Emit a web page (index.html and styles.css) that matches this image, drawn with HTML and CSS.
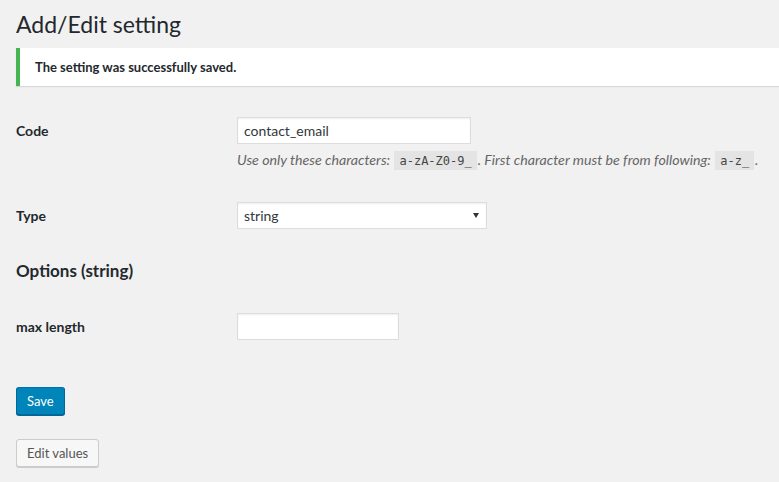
FILE: index.html
```html
<!DOCTYPE html>
<html lang="en">
<head>
<meta charset="utf-8">
<title>Add/Edit setting</title>
<link rel="stylesheet" href="styles.css">
</head>
<body>
<div class="wrap">
  <h1 class="page-title">Add/Edit setting</h1>
  <div class="notice notice-success"><p>The setting was successfully saved.</p></div>
  <form class="setting-form">
    <div class="field-row row-code">
      <label class="field-label" for="code">Code</label>
      <div class="field-control">
        <input class="text-input input-code" id="code" type="text" value="contact_email">
        <p class="description">Use only these characters: <code>a-zA-Z0-9_</code>. First character must be from following: <code>a-z_</code>.</p>
      </div>
    </div>
    <div class="field-row row-type">
      <label class="field-label" for="type">Type</label>
      <div class="field-control">
        <div class="select-wrap">
          <select id="type" class="select-input"><option>string</option></select>
        </div>
      </div>
    </div>
    <h2 class="section-title">Options (string)</h2>
    <div class="field-row row-max">
      <label class="field-label" for="maxlen">max length</label>
      <div class="field-control">
        <input class="text-input input-max" id="maxlen" type="text" value="">
      </div>
    </div>
    <div class="actions">
      <button type="button" class="button button-primary">Save</button>
      <button type="button" class="button button-secondary">Edit values</button>
    </div>
  </form>
</div>
</body>
</html>
```
FILE: styles.css
```css
html, body {
  margin: 0;
  padding: 0;
  background: #f1f1f1;
}
body {
  font-family: "Lato", "Open Sans", sans-serif;
  color: #444;
  font-size: 13px;
}
.wrap {
  padding: 0 0 0 16px;
}
.page-title {
  margin: 0;
  padding-top: 10px;
  font-size: 23px;
  font-weight: 400;
  line-height: 29px;
  color: #23282d;
}
.notice {
  margin-top: 9px;
  background: #fff;
  border-left: 4px solid #46b450;
  box-shadow: 0 1px 1px rgba(0,0,0,0.1);
  padding: 0 12px 0 15px;
}
.notice p {
  margin: 0;
  padding: 9px 0;
  line-height: 20px;
  font-size: 13px;
  font-weight: 700;
  color: #23282d;
}
.setting-form {
  display: flex;
  flex-direction: column;
}
.field-row {
  display: flex;
  align-items: flex-start;
}
.field-label {
  width: 221px;
  flex: none;
  font-size: 14px;
  font-weight: 700;
  color: #23282d;
  line-height: 27px;
}
.field-control {
  display: flex;
  flex-direction: column;
  align-items: flex-start;
}
.row-code { margin-top: 31px; }
.row-type { margin-top: 28px; }
.row-max { margin-top: 31px; }
.text-input, .select-input {
  box-sizing: border-box;
  height: 27px;
  border: 1px solid #ddd;
  box-shadow: inset 0 1px 2px rgba(0,0,0,0.07);
  background: #fff;
  color: #32373c;
  font-family: inherit;
  font-size: 14px;
  padding: 0 6px;
  margin: 0;
  outline: none;
}
.input-code { width: 234px; }
.input-max { width: 162px; }
.description {
  margin: 2px 0 0 0;
  height: 28px;
  line-height: 28px;
  font-size: 14.2px;
  font-style: italic;
  color: #666;
  white-space: nowrap;
}
code {
  font-family: "DejaVu Sans Mono", monospace;
  font-style: normal;
  font-size: 12px;
  background: #e4e4e4;
  padding: 3px 5px 2px;
  margin: 0 1px;
  color: #444;
}
.select-wrap {
  position: relative;
}
.select-input {
  width: 250px;
  -webkit-appearance: none;
  appearance: none;
  padding: 0 6px;
}
.select-wrap::after {
  content: "";
  position: absolute;
  right: 8px;
  top: 11px;
  border-left: 3px solid transparent;
  border-right: 3px solid transparent;
  border-top: 5px solid #333;
}
.section-title {
  margin: 31px 0 0 0;
  font-size: 17px;
  line-height: 22px;
  font-weight: 700;
  color: #23282d;
}
.actions {
  display: flex;
  flex-direction: column;
  align-items: flex-start;
  gap: 24px;
  margin-top: 47px;
  padding-bottom: 16px;
}
.button {
  box-sizing: border-box;
  height: 28px;
  border-radius: 3px;
  font-family: inherit;
  font-size: 13px;
  line-height: 26px;
  padding: 0 10px;
  cursor: pointer;
  margin: 0;
}
.button-primary {
  background: #0085ba;
  border: 1px solid;
  border-color: #0073aa #006799 #006799;
  box-shadow: 0 1px 0 #006799;
  color: #fff;
}
.button-secondary {
  background: #f7f7f7;
  border: 1px solid #ccc;
  box-shadow: 0 1px 0 #ccc;
  color: #555;
}
```
